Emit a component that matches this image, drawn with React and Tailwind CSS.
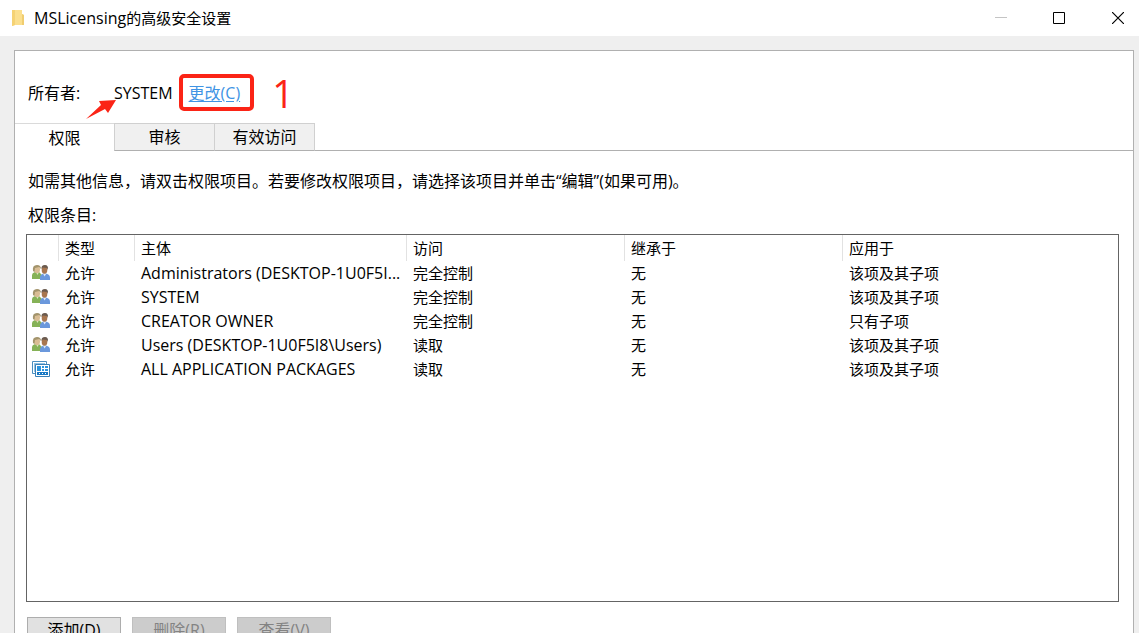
const entries = [
  { icon: "group", principal: "Administrators (DESKTOP-1U0F5I...", access: "完全控制", applies: "该项及其子项" },
  { icon: "group", principal: "SYSTEM", access: "完全控制", applies: "该项及其子项" },
  { icon: "group", principal: "CREATOR OWNER", access: "完全控制", applies: "只有子项" },
  { icon: "group", principal: "Users (DESKTOP-1U0F5I8\\Users)", access: "读取", applies: "该项及其子项" },
  { icon: "package", principal: "ALL APPLICATION PACKAGES", access: "读取", applies: "该项及其子项" },
];

function FolderIcon() {
  return (
    <svg width="12" height="18" viewBox="0 0 12 18" aria-hidden="true">
      <path d="M0 1h10v4l2 1v10H3l-3 1z" fill="#fbdf8e" />
      <path d="M0 1h3v15l-3 1z" fill="#f5d274" />
      <path d="M10 5l2 1v10h-2z" fill="#f0cd70" />
    </svg>
  );
}

function GroupIcon() {
  return (
    <svg width="18" height="16" viewBox="0 0 18 16" aria-hidden="true">
      <path d="M0 14V10q0-2 3-3h4l3 3v4z" fill="#86b257" />
      <path d="M4 7l1.500 3L7 7z" fill="#dceac6" />
      <ellipse cx="5" cy="4.500" rx="3" ry="3.800" fill="#d9bd94" />
      <path d="M1 6Q0 0 5 0q4 0 4 4L7 2 3 3 2.500 7z" fill="#a3946c" />
      <path d="M8 15v-3q0-2 3-3.500h3q4 1 4 4V15z" fill="#6b98dc" />
      <path d="M11 8.500l1.500 3 2-3z" fill="#dbe8fa" />
      <ellipse cx="12.500" cy="5" rx="2.800" ry="3.800" fill="#a8764f" />
      <path d="M9.500 4Q9 0 13 0q3.500 0 3 5l-1-2-4-.500z" fill="#6a5a4e" />
    </svg>
  );
}

function PackageIcon() {
  return (
    <svg width="18" height="16" viewBox="0 0 18 16" aria-hidden="true">
      <path d="M.5 12.500V.5h14v12z" fill="#fff" stroke="#4a8fc0" />
      <path d="M2 2h11v9H2z" fill="#8fc3e6" />
      <path d="M3.500 3.500h14v12h-14z" fill="#fff" stroke="#3a80b6" />
      <path d="M5 5h4v5H5z" fill="#2b93dc" />
      <path d="M10 5h2v2h-2zM13 5h3v2h-3zM10 8h2v2h-2zM13 8h3v2h-3z" fill="#2b93dc" />
      <path d="M5 11h11v3H5z" fill="#1778c4" />
      <path d="M7 12h1v1H7zM10 12h1v1h-1zM13 12h1v1h-1z" fill="#fff" />
    </svg>
  );
}

function TitleBar() {
  return (
    <header className="flex h-9 shrink-0 items-center bg-white pb-px pl-3 text-[15px]">
      <FolderIcon />
      <h1 className="flex-1 pl-[10px]"><span className="text-[16px]">MSLicensing</span>的高级安全设置</h1>
      <div className="flex h-full">
        <button type="button" aria-label="最小化" disabled className="flex w-[58px] items-center justify-center">
          <svg width="12" height="12" viewBox="0 0 12 12"><path d="M0 5.500h12" stroke="#c4c4c4" /></svg>
        </button>
        <button type="button" aria-label="最大化" className="flex w-[58px] items-center justify-center">
          <svg width="12" height="12" viewBox="0 0 12 12"><path d="M.5.5h11v11H.5z" fill="none" stroke="#000" /></svg>
        </button>
        <button type="button" aria-label="关闭" className="flex w-[51px] items-center justify-center pl-[8px]">
          <svg width="12" height="12" viewBox="0 0 12 12"><path d="M0 0l12 12M12 0L0 12" stroke="#000" strokeWidth="1.200" /></svg>
        </button>
      </div>
    </header>
  );
}

function OwnerRow() {
  return (
    <div className="flex h-[72px] items-center pl-[13px] pt-[11px] text-[16px] leading-6">
      <span className="w-[86px]">所有者:</span>
      <span className="relative">
        SYSTEM
        <svg className="absolute -left-7 top-[19px]" width="32" height="20" viewBox="0 0 32 20" aria-hidden="true">
          <path d="M0 19L15 5l-2-4L30 0 22 13l-3-4z" fill="#fb2416" />
        </svg>
      </span>
      <span className="relative ml-4">
        <a href="#owner" className="text-[#3f94e4] underline underline-offset-2">更改(C)</a>
        <span className="pointer-events-none absolute -left-[10px] -right-[14px] -top-[7px] -bottom-[6px] rounded-[5px] border-4 border-[#fb2416]" />
      </span>
      <span className="ml-8 text-[38px] leading-9 text-[#fb2416]">1</span>
    </div>
  );
}

function Tabs() {
  return (
    <div role="tablist" className="flex h-7 text-[16px]">
      <button type="button" role="tab" aria-selected="true" className="w-[99px] border-t border-[#dadada] bg-white">权限</button>
      <button type="button" role="tab" aria-selected="false" className="w-[101px] border border-[#d0d0d0] border-b-[#b0b0b0] bg-[#f0f0f0] pb-px">审核</button>
      <button type="button" role="tab" aria-selected="false" className="w-[100px] border border-l-0 border-[#d0d0d0] border-b-[#b0b0b0] bg-[#f0f0f0] pb-px">有效访问</button>
      <div className="flex-1 border-b border-[#b0b0b0]" />
    </div>
  );
}

function EntryTable() {
  const th = "border-l border-[#e2e2e2] pl-[6px] text-left font-normal";
  const td = "truncate border-l border-transparent pl-[6px]";
  return (
    <div className="min-h-[368px] border border-[#646464]">
      <table aria-labelledby="entries-label" className="w-full table-fixed border-separate border-spacing-0 text-[15px] leading-6">
        <colgroup>
          <col className="w-[31px]" />
          <col className="w-[76px]" />
          <col className="w-[272px]" />
          <col className="w-[218px]" />
          <col className="w-[218px]" />
          <col />
        </colgroup>
        <thead>
          <tr className="h-[26px]">
            <td />
            <th scope="col" className={th}>类型</th>
            <th scope="col" className={th}>主体</th>
            <th scope="col" className={th}>访问</th>
            <th scope="col" className={th}>继承于</th>
            <th scope="col" className={th}>应用于</th>
          </tr>
        </thead>
        <tbody>
          {entries.map((e) => (
            <tr key={e.principal} className="h-6">
              <td>
                <div className="flex h-6 items-center pl-[5px]">
                  {e.icon === "group" ? <GroupIcon /> : <PackageIcon />}
                </div>
              </td>
              <td className={td}>允许</td>
              <td className="truncate border-l border-transparent pl-[6px] text-[16px]">{e.principal}</td>
              <td className={td}>{e.access}</td>
              <td className={td}>无</td>
              <td className={td}>{e.applies}</td>
            </tr>
          ))}
        </tbody>
      </table>
    </div>
  );
}

function ActionButton({ children, disabled }) {
  return (
    <button
      type="button"
      disabled={disabled}
      className="h-7 w-[94px] border border-[#adadad] bg-[#e1e1e1] pb-1 text-[16px] leading-6 disabled:border-[#bfbfbf] disabled:bg-[#cccccc] disabled:text-[#838383]"
    >
      {children}
    </button>
  );
}

export default function App() {
  return (
    <div className="flex h-screen flex-col overflow-hidden bg-[#efefef] font-['Open_Sans','Noto_Sans_CJK_SC',sans-serif] text-black">
      <TitleBar />
      <main className="ml-[14px] mr-[5px] mt-[14px] shrink-0 border border-[#b0b0b0] bg-white pb-6">
        <OwnerRow />
        <Tabs />
        <section role="tabpanel" className="pl-[11px] pr-[14px] pt-[18px]">
          <p className="pl-[2px] text-[16px] leading-6">如需其他信息，请双击权限项目。若要修改权限项目，请选择该项目并单击“编辑”(如果可用)。</p>
          <p id="entries-label" className="mb-[7px] mt-[10px] pl-[2px] text-[16px] leading-6">权限条目:</p>
          <EntryTable />
          <div className="mt-[15px] flex gap-[11px] pl-px">
            <ActionButton>添加(D)</ActionButton>
            <ActionButton disabled>删除(R)</ActionButton>
            <ActionButton disabled>查看(V)</ActionButton>
          </div>
        </section>
      </main>
    </div>
  );
}
